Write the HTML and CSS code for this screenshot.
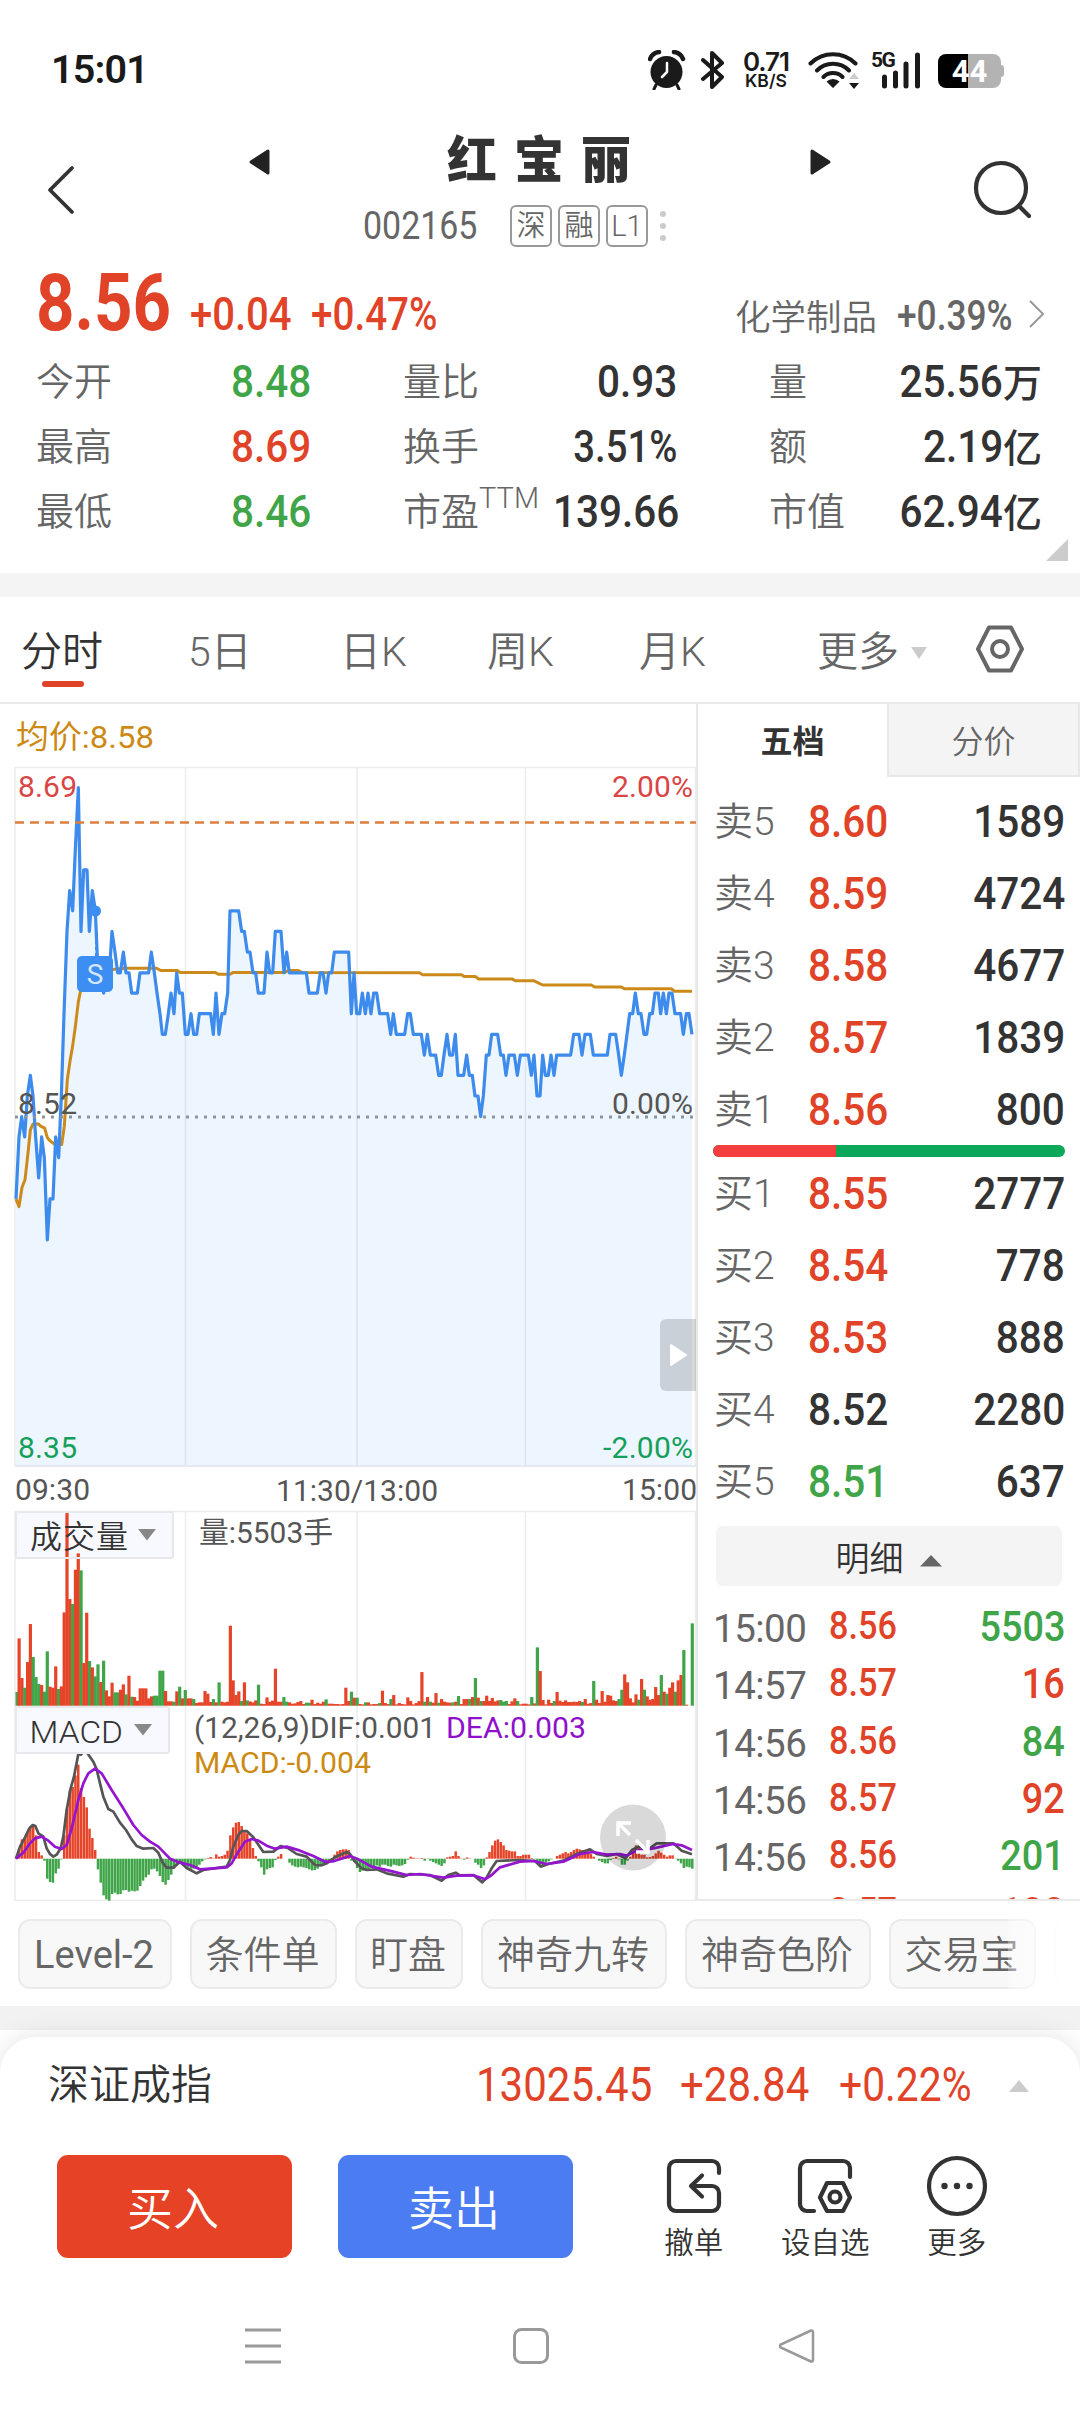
FILE: index.html
```html
<!DOCTYPE html>
<html lang="zh-CN">
<head>
<meta charset="utf-8">
<title>红宝丽 002165</title>
<link rel="stylesheet" href="styles.css">
</head>
<body>
<div class="status">
  <span class="clock">15:01</span>
  <div class="sys">
    <svg class="i-alarm" width="38" height="40" viewBox="0 0 38 40"><circle cx="18.500" cy="22" r="16"/><path d="M2 9a11 11 0 0 1 9-7M26 2a11 11 0 0 1 9 7" stroke-width="4.500"/><path d="M8 35l-2 4M29 35l2 4" stroke-width="3"/><path class="hand" d="M19 13v9l-5 5"/></svg>
    <svg class="i-bt" width="24" height="38" viewBox="0 0 24 38"><path d="M2 9l19 17-10 10V2l10 10L2 28"/></svg>
    <div class="rate"><b>0.71</b><i>KB/S</i></div>
    <svg class="i-wifi" width="51" height="38" viewBox="0 0 51 38"><path d="M2.500 12.500a32 32 0 0 1 45 0M9 19.500a22.500 22.500 0 0 1 32 0M15.500 26a13.500 13.500 0 0 1 19 0"/><path class="f" d="M25 37l-6.500-6.500a9.500 9.500 0 0 1 13 0zM41 32h10l-5 6z"/><path class="g" d="M41 28h10l-5-6z"/></svg>
    <div class="sig"><span>5G</span><svg width="49" height="37" viewBox="0 0 49 37"><path d="M12.500 25v9M23.500 21v13M34 12v22M45.500 3v31"/></svg></div>
    <div class="bat"><span>44</span></div>
  </div>
</div>
<header class="head">
  <svg class="back" width="30" height="50" viewBox="0 0 30 50"><path d="M27 3L5 25l22 22"/></svg>
  <svg class="tri tri-l" width="22" height="28" viewBox="0 0 22 28"><path d="M20 3v22L3 14z"/></svg>
  <div class="title">
    <h1>红宝丽</h1>
    <div class="sub"><span class="code">002165</span><em>深</em><em>融</em><em>L1</em><svg width="8" height="32" viewBox="0 0 8 32"><circle cx="4" cy="4" r="3"/><circle cx="4" cy="16" r="3"/><circle cx="4" cy="28" r="3"/></svg></div>
  </div>
  <svg class="tri tri-r" width="22" height="28" viewBox="0 0 22 28"><path d="M2 3v22l17-11z"/></svg>
  <svg class="search" width="60" height="60" viewBox="0 0 60 60"><circle cx="28" cy="28" r="25"/><path d="M46 46l10 10"/></svg>
</header>
<section class="quote">
  <div class="price">
    <span class="big up din">8.56</span><span class="chg up din">+0.04</span><span class="chg up din pct">+0.47%</span>
    <span class="ind">化学制品</span><span class="indv din">+0.39%</span>
    <svg width="18" height="30" viewBox="0 0 18 30"><path d="M2 2l13 13L2 28"/></svg>
  </div>
  <div class="stats">
    <div><span>今开</span><b class="dn din r">8.48</b></div><div><span>量比</span><b class="din r">0.93</b></div><div><span>量</span><b><i class="din r">25.56</i>万</b></div>
    <div><span>最高</span><b class="up din r">8.69</b></div><div><span>换手</span><b class="din r pc">3.51%</b></div><div><span>额</span><b><i class="din r">2.19</i>亿</b></div>
    <div><span>最低</span><b class="dn din r">8.46</b></div><div><span>市盈<sup>TTM</sup></span><b class="din r">139.66</b></div><div><span>市值</span><b><i class="din r">62.94</i>亿</b></div>
  </div>
  <svg class="corner" width="22" height="22" viewBox="0 0 22 22"><path d="M22 0v22H0z"/></svg>
</section>
<div class="band"></div>
<nav class="tabs">
  <span class="on">分时</span><span>5日</span><span>日K</span><span>周K</span><span>月K</span><span>更多<svg width="16" height="12" viewBox="0 0 16 12"><path d="M0 0h16l-8 12z"/></svg></span>
  <svg class="gear" width="50" height="50" viewBox="0 0 50 50"><path d="M14 3.500h22L47 25 36 46.500H14L3 25z"/><circle cx="25" cy="25" r="8"/></svg>
</nav>
<main class="main">
  <div class="left">
    <svg class="chart" width="698" height="1197" viewBox="0 704 698 1197">
      <g class="grid">
        <path d="M15 1466V767.500H697M185.500 767V1466M357 767V1466M525.500 767V1466M15 1511.500H697M15 1511V1900.500H697M185.500 1511V1900M357 1511V1900M525.500 1511V1900M695.500 767V1466M695.500 1511V1900"/>
      </g>
      <g transform="translate(0 690) scale(.33333 .38265)">
        <path class="area" id="area"/>
        <polyline class="ln avg" points="48,1330 57,1350 66,1300 75,1280 84,1210 91,1150 99,1134 115,1134 122,1140 134,1145 142,1170 150,1178 165,1188 185,1188 193,1140 202,1018 210,970 218,930 226,880 235,815 243,780 260,750 300,735 345,730 375,727 470,727 482,733 532,733 540,738 645,738 655,743 690,743 700,738 855,738 865,733 895,733 905,738 1258,739 1268,744 1384,744 1394,749 1426,749 1436,755 1536,755 1546,760 1602,760 1628,771 1774,771 1784,776 1864,776 1874,781 2014,781 2024,787 2076,787"/>
        <polyline class="ln px" id="px" points="48,1330 57,1168 65,1115 74,1168 82,1061 91,1007 99,1061 107,1168 116,1275 125,1168 133,1222 142,1437 150,1330 159,1330 167,1168 176,1222 184,1060 192,846 201,631 209,524 218,577 226,417 235,255 243,631 251,470 261,470 268,631 277,524 286,577 294,739 302,739 311,792 320,739 328,739 336,631 345,685 353,739 361,739 370,685 378,739 387,739 395,792 412,792 420,739 446,739 454,685 463,739 471,792 480,846 487,900 496,900 505,846 513,792 522,846 530,739 538,792 547,792 556,900 564,900 573,846 581,900 590,900 598,846 632,846 640,900 648,792 657,900 666,846 674,846 683,792 690,577 716,577 725,631 733,631 742,685 750,685 759,739 767,739 775,792 792,792 801,685 809,739 818,739 826,631 843,631 852,739 860,685 868,739 919,739 927,792 952,792 961,739 969,739 978,792 986,739 995,739 1003,685 1046,685 1054,846 1062,739 1070,846 1079,846 1087,792 1096,846 1104,792 1113,846 1121,792 1130,792 1139,846 1163,846 1172,900 1180,846 1189,900 1214,900 1223,846 1231,846 1240,900 1264,900 1273,954 1282,900 1291,954 1307,954 1316,1007 1324,1007 1332,954 1341,900 1349,954 1358,954 1366,900 1374,1007 1391,1007 1400,954 1408,1007 1417,1007 1425,1061 1434,1061 1442,1115 1450,1061 1459,954 1467,954 1475,900 1493,900 1502,954 1510,954 1518,1007 1527,954 1543,954 1552,1007 1561,954 1585,954 1594,1007 1602,954 1611,1061 1620,1061 1628,954 1636,1007 1645,1007 1653,954 1662,1007 1670,954 1712,954 1721,900 1737,900 1746,954 1755,900 1771,900 1780,954 1822,954 1830,900 1847,900 1856,954 1864,1007 1873,954 1881,900 1889,846 1898,846 1906,792 1915,846 1923,846 1932,900 1940,900 1949,846 1957,846 1965,792 1975,792 1982,846 1990,792 1999,846 2007,792 2016,792 2025,846 2042,846 2050,900 2059,846 2067,846 2076,900"/>
      </g>
      <path class="limit" d="M15 822.500H696"/>
      <path class="zero" d="M15 1117H693"/>
      <path class="base" d="M15 1466H697"/>
      <path class="mark-line" d="M96 911V957"/>
      <circle class="mark" cx="95.500" cy="911" r="5.500"/>
      <rect class="mark" x="77" y="956" width="36" height="36" rx="5"/>
      <text class="mark-s" x="95" y="984" text-anchor="middle">S</text>
      <g class="lab">
        <text class="c-avg big-lab" x="16" y="748" textLength="138" lengthAdjust="spacingAndGlyphs">均价:8.58</text>
        <text class="c-up" x="18" y="797" textLength="59">8.69</text><text class="c-up" x="612" y="797" textLength="81">2.00%</text>
        <text x="18" y="1114" textLength="59">8.52</text><text x="612" y="1114" textLength="81">0.00%</text>
        <text class="c-dn" x="18" y="1458" textLength="59">8.35</text><text class="c-dn" x="603" y="1458" textLength="90">-2.00%</text>
        <text x="15" y="1500" textLength="75">09:30</text><text x="276" y="1501" textLength="162">11:30/13:00</text><text x="622" y="1500" textLength="75">15:00</text>
      </g>
      <rect class="box" x="16" y="1512" width="157" height="46" rx="2"/>
      <g id="vol"></g>
      <path class="boxline" d="M17 1558H172"/>
      <g id="macd"></g>
      <g transform="translate(0 1500) scale(.33333)">
        <polyline class="ln dif" points="48,1076 60,1040 75,1012 88,985 98,975 106,978 115,1000 130,1010 140,1045 150,1062 160,1070 170,1064 182,1045 190,1010 200,930 212,865 222,830 235,762 243,764 250,755 258,752 266,765 280,785 290,808 300,850 310,890 325,927 340,935 360,968 378,990 395,1018 410,1038 430,1046 460,1044 475,1058 488,1088 500,1103 520,1103 540,1085 560,1104 590,1120 610,1110 650,1104 680,1100 690,1080 700,1040 715,1005 725,993 740,993 760,1012 790,1056 820,1055 842,1038 865,1045 890,1062 920,1070 945,1095 965,1096 980,1090 1005,1072 1040,1056 1050,1062 1065,1085 1085,1105 1100,1110 1130,1108 1160,1120 1210,1130 1230,1122 1290,1125 1325,1142 1345,1125 1367,1118 1380,1126 1420,1125 1447,1147 1460,1132 1475,1105 1490,1083 1560,1080 1605,1083 1622,1100 1645,1092 1690,1082 1730,1062 1770,1048 1790,1062 1820,1068 1850,1062 1876,1075 1896,1050 1915,1040 1945,1048 1970,1030 2020,1030 2045,1052 2076,1063"/>
        <polyline class="ln dea" points="48,1076 70,1058 90,1030 105,1015 125,1010 145,1022 165,1040 185,1047 200,1035 215,985 235,900 250,850 265,820 285,806 305,820 335,870 370,925 400,975 425,1005 450,1025 475,1040 510,1076 540,1088 570,1095 600,1108 680,1102 695,1090 715,1055 735,1025 755,1017 775,1022 800,1037 825,1046 860,1040 900,1052 940,1068 975,1085 1000,1084 1050,1068 1075,1078 1115,1100 1180,1115 1220,1125 1260,1122 1330,1133 1370,1127 1420,1126 1455,1138 1475,1125 1500,1102 1560,1085 1600,1083 1640,1092 1690,1085 1740,1062 1780,1056 1820,1064 1860,1062 1880,1067 1910,1052 1960,1045 2020,1032 2045,1036 2076,1050"/>
      </g>
      <rect class="box" x="16" y="1707" width="153" height="46" rx="2"/>
      <g class="lab">
        <text class="boxt" x="30" y="1548" textLength="98">成交量</text><path class="caret" d="M138 1529H156L147 1540.500Z"/>
        <text class="volt" x="199" y="1543" textLength="134" lengthAdjust="spacingAndGlyphs">量:5503手</text>
        <text class="boxt" x="29.500" y="1742.500" textLength="93.500" lengthAdjust="spacingAndGlyphs">MACD</text><path class="caret" d="M134 1724H152L143 1735.500Z"/>
        <text x="194" y="1738" textLength="242" lengthAdjust="spacingAndGlyphs">(12,26,9)DIF:0.001</text>
        <text class="c-dea" x="446" y="1738" textLength="140" lengthAdjust="spacingAndGlyphs">DEA:0.003</text>
        <text class="c-avg" x="194" y="1773" textLength="177" lengthAdjust="spacingAndGlyphs">MACD:-0.004</text>
      </g>
      <path class="handle" d="M697 1319V1391H666a6 6 0 0 1-6-6V1325a6 6 0 0 1 6-6z"/>
      <path class="handle-t" d="M671 1345V1365L686 1355Z"/>
      <circle class="handle" cx="633" cy="1837.500" r="33"/>
      <path class="arrows" d="M631 1823H618V1836M618 1823L630 1835M636 1840L648 1852M648 1840V1852H636"/>
    </svg>
  </div>
  <aside class="right">
    <div class="rt"><b>五档</b><span>分价</span></div>
    <div class="book">
      <div><span>卖5</span><b class="din up">8.60</b><b class="din r">1589</b></div>
      <div><span>卖4</span><b class="din up">8.59</b><b class="din r">4724</b></div>
      <div><span>卖3</span><b class="din up">8.58</b><b class="din r">4677</b></div>
      <div><span>卖2</span><b class="din up">8.57</b><b class="din r">1839</b></div>
      <div><span>卖1</span><b class="din up">8.56</b><b class="din r">800</b></div>
    </div>
    <div class="ratio"><i></i></div>
    <div class="book bid">
      <div><span>买1</span><b class="din up">8.55</b><b class="din r">2777</b></div>
      <div><span>买2</span><b class="din up">8.54</b><b class="din r">778</b></div>
      <div><span>买3</span><b class="din up">8.53</b><b class="din r">888</b></div>
      <div><span>买4</span><b class="din">8.52</b><b class="din r">2280</b></div>
      <div><span>买5</span><b class="din dn">8.51</b><b class="din r">637</b></div>
    </div>
    <div class="more">明细<svg width="24" height="13" viewBox="0 0 24 13"><path d="M1 12.500L12 1l11 11.500z"/></svg></div>
    <div class="ticks">
      <div><span>15:00</span><b class="din up">8.56</b><b class="din r q dn">5503</b></div>
      <div><span>14:57</span><b class="din up">8.57</b><b class="din r q up">16</b></div>
      <div><span>14:56</span><b class="din up">8.56</b><b class="din r q dn">84</b></div>
      <div><span>14:56</span><b class="din up">8.57</b><b class="din r q up">92</b></div>
      <div><span>14:56</span><b class="din up">8.56</b><b class="din r q dn">201</b></div>
      <div><span>14:56</span><b class="din up">8.57</b><b class="din r q up">100</b></div>
    </div>
  </aside>
</main>
<div class="chips"><span class="lv">Level-2</span><span>条件单</span><span>盯盘</span><span>神奇九转</span><span>神奇色阶</span><span>交易宝</span><span></span></div>
<div class="band low"></div>
<footer class="dock">
  <div class="index"><span class="name">深证成指</span><span class="din up i1">13025.45</span><span class="din up i2">+28.84</span><span class="din up i3">+0.22%</span><svg width="24" height="14" viewBox="0 0 24 14"><path d="M12 1l10 12H2z"/></svg></div>
  <div class="acts">
    <button class="buy">买入</button><button class="sell">卖出</button>
    <div class="act"><svg width="62" height="62" viewBox="0 0 62 62"><path d="M56 18v-5a7 7 0 0 0-7-7H13a7 7 0 0 0-7 7v36a7 7 0 0 0 7 7h36a7 7 0 0 0 7-7V38a7 7 0 0 0-7-7H28M39 20.500L28 31l11 10.500"/></svg>撤单</div>
    <div class="act"><svg width="62" height="62" viewBox="0 0 62 62"><path d="M56 22v-9a7 7 0 0 0-7-7H13a7 7 0 0 0-7 7v36a7 7 0 0 0 7 7h7M33 28h16l7 14.500L49 56H33l-7-13.500z"/><circle cx="41" cy="42" r="5.500"/></svg>设自选</div>
    <div class="act"><svg width="62" height="62" viewBox="0 0 62 62"><circle cx="31" cy="31" r="28"/><g class="dots"><circle cx="18.500" cy="31" r="3.200"/><circle cx="31" cy="31" r="3.200"/><circle cx="43.500" cy="31" r="3.200"/></g></svg>更多</div>
  </div>
</footer>
<div class="sysnav">
  <svg width="36" height="36" viewBox="0 0 36 36"><path d="M0 2h36M0 18h36M0 34h36"/></svg>
  <svg width="36" height="36" viewBox="0 0 36 36"><rect x="1.500" y="1.500" width="33" height="33" rx="7"/></svg>
  <svg width="36" height="36" viewBox="0 0 36 36"><path d="M32 2.500a1.500 1.500 0 0 1 2 1.500v28a1.500 1.500 0 0 1-2 1.500L3 20a2 2 0 0 1 0-4z"/></svg>
</div>
<script src="chart.js"></script>
</body>
</html>
```
FILE: styles.css
```css
* { box-sizing: border-box; margin: 0; padding: 0; }
body { width: 1080px; height: 2412px; overflow: hidden; background: #fff; color: #333; font-family: Roboto, "Noto Sans CJK SC", sans-serif; display: flex; flex-direction: column; }
svg { display: block; flex: none; }
i, em { font-style: normal; }
.up { color: #e04328; }
.dn { color: #3fa548; }
.din { display: inline-block; transform: scaleX(.9); transform-origin: left; font-weight: 550; white-space: nowrap; }
.din.r { transform-origin: right; }

.status { height: 104px; padding: 34px 79px 0 51px; display: flex; justify-content: space-between; color: #1a1a1a; }
.clock { font-size: 39.5px; font-weight: 600; line-height: 72px; letter-spacing: -.8px; }
.sys { display: flex; height: 70px; padding-top: 16px; }
.sys svg { fill: none; stroke: #1a1a1a; stroke-linecap: round; stroke-linejoin: round; }
.sys .i-alarm { margin-right: 15px; }
.sys .i-alarm circle { fill: #1a1a1a; stroke: none; }
.sys .i-alarm .hand { stroke: #fff; stroke-width: 2.5; }
.sys .i-bt { stroke-width: 4; margin: 1px 14px 0 0; }
.rate { width: 54px; text-align: center; font-family: Inter, sans-serif; margin-right: 15px; }
.rate b { display: block; font-size: 26px; font-weight: 600; line-height: 24px; letter-spacing: -1px; }
.rate i { display: block; font-size: 17.5px; font-weight: 600; line-height: 14px; }
.sys .i-wifi { stroke-width: 4; margin: 1px 13px 0 0; }
.i-wifi .f { fill: #1a1a1a; stroke: none; }
.i-wifi .g { fill: #ccc; stroke: none; }
.sig { position: relative; width: 50px; margin-right: 16px; }
.sig span { position: absolute; left: -1px; top: 1px; font-size: 21px; font-weight: 700; line-height: 18px; letter-spacing: -1.5px; }
.sys .sig svg { stroke-width: 5; margin-top: 2px; }
.bat { position: relative; width: 63px; height: 34px; margin-top: 4px; border-radius: 8px; background: linear-gradient(90deg, #000 30px, #b3b3b3 30px); text-align: center; }
.bat::after { content: ""; position: absolute; right: -3px; top: 11px; width: 4px; height: 12px; border-radius: 0 3px 3px 0; background: #b3b3b3; }
.bat span { color: #fff; font-size: 31px; font-weight: 700; line-height: 35px; }

.head { height: 158px; padding: 0 47px 0 45px; display: flex; }
.back { margin-top: 61px; fill: none; stroke: #333; stroke-width: 3.8; stroke-linecap: round; stroke-linejoin: round; }
.tri { margin-top: 44px; fill: #222; stroke: #222; stroke-width: 3; stroke-linejoin: round; }
.tri-l { margin-left: 173px; }
.tri-r { margin-left: auto; }
.title { width: 420px; margin-left: 59px; padding: 24px 0 0 34px; }
h1 { font-size: 50px; font-weight: 900; line-height: 66px; letter-spacing: 17px; color: #333; text-align: left; padding-left: 84px; white-space: nowrap; }
.sub { display: flex; align-items: center; height: 42px; margin-top: 11px; color: #666; }
.code { width: 147px; font-size: 39px; display: inline-block; transform: scaleX(.87); transform-origin: left; font-weight: 400; }
.sub em { flex: none; width: 42px; height: 42px; border: 2px solid #999; border-radius: 6px; font-size: 29px; line-height: 38px; text-align: center; margin-right: 6px; font-weight: 350; }
.sub svg { fill: #ccc; margin-left: 5px; }
.search { margin: 56px 0 0 141px; fill: none; stroke: #333; stroke-width: 4.2; stroke-linecap: round; }

.quote { height: 311px; padding: 0 38px 0 36px; position: relative; }
.price { display: grid; grid-template-columns: 154px 121px 1fr 162px 131px 14px; align-items: baseline; height: 86px; white-space: nowrap; }
.price .big { font-size: 80px; line-height: 82px; font-weight: 700; transform: scaleX(.84); }
.price .chg { font-size: 46px; transform: scaleX(.87); }
.price .pct { transform: scaleX(.84); }
.ind { font-size: 35.5px; color: #666; font-weight: 350; }
.price .indv { font-size: 42px; color: #666; transform: scaleX(.84); font-weight: 500; }
.price svg { align-self: start; margin-top: 37px; margin-left: 0; width: 18px; fill: none; stroke: #999; stroke-width: 2; }
.stats { display: grid; grid-template-columns: 275px 274px 273px; column-gap: 92px; grid-auto-rows: 65px; }
.stats div { display: flex; justify-content: space-between; line-height: 67px; white-space: nowrap; }
.stats span { font-size: 38px; color: #666; font-weight: 350; line-height: 69px; }
.stats sup { font-size: 29px; position: relative; top: -5px; line-height: 0; vertical-align: 12px; }
.stats b { font-size: 45px; font-weight: 550; }
.stats .pc { transform: scaleX(.85); }
.stats b:not(.din) { font-size: 39px; font-weight: 450; }
.stats b i { font-size: 45px; }
.corner { position: absolute; right: 12px; top: 277px; fill: #ccc; }
.band { height: 24px; background: #f4f4f4; }

.tabs { height: 107px; padding: 0 55px 0 21px; display: grid; grid-template-columns: 167px 152px 147px 152px 178px 156px 50px; border-bottom: 2px solid #e9e9e9; font-size: 41px; color: #666; font-weight: 350; line-height: 111px; }
.tabs span { display: flex; align-items: center; white-space: nowrap; }
.tabs span svg { fill: #ccc; margin-left: 12px; }
.tabs .on { color: #333; position: relative; }
.tabs .on::after { content: ""; position: absolute; left: 21px; top: 84px; width: 42px; height: 6px; border-radius: 3px; background: #e04328; }
.gear { margin: 27px 0 0 2px; fill: none; stroke: #666; stroke-width: 4; stroke-linejoin: round; }

.main { height: 1197px; display: flex; }
.left { width: 696px; }
.chart .grid { fill: none; stroke: #ececec; stroke-width: 1.5; }
.area { fill: rgba(60, 140, 240, .09); }
.ln { fill: none; stroke-width: 3.2; stroke-linejoin: round; vector-effect: non-scaling-stroke; }
.avg { stroke: #cc8a1a; stroke-width: 3; }
.px { stroke: #3d8bec; }
.dif { stroke: #555; stroke-width: 2.7; }
.dea { stroke: #9414d0; stroke-width: 2.7; }
.limit { stroke: #dc7f3f; stroke-width: 2.5; stroke-dasharray: 9 6; }
.zero { stroke: #8e949c; stroke-width: 3; stroke-dasharray: 3 6; }
.base { stroke: #e4e9ef; stroke-width: 2; }
.mark { fill: #3d8ef2; }
.mark-line { stroke: #3d8ef2; stroke-width: 2; stroke-dasharray: 3 3; }
.mark-s { font-size: 28px; fill: #d5e6fc; }
.lab { font-size: 30px; fill: #555; }
.big-lab { font-size: 32px; font-weight: 400; }
.c-avg { fill: #cc8a14; }
.c-up { fill: #d94545; }
.c-dn { fill: #14a05a; }
.c-dea { fill: #8f10cc; }
.box { fill: #f8f9fe; stroke: #e8e8ec; stroke-width: 2; }
.boxline { stroke: #e8e8ec; stroke-width: 2; }
.boxt { font-size: 32px; fill: #333; font-weight: 350; }
.volt { font-size: 29px; }
.caret { fill: #888; }
.b-r { fill: #e64428; }
.b-g { fill: #3fa548; }
.handle { fill: #000; fill-opacity: .15; }
.handle-t { fill: #fff; stroke: #fff; stroke-width: 2; stroke-linejoin: round; }
.arrows { fill: none; stroke: #fff; stroke-width: 3.5; }

.right { width: 384px; height: 1197px; border-left: 2px solid #e9e9e9; border-bottom: 2px solid #e9e9e9; overflow: hidden; }
.rt { display: flex; height: 73px; font-size: 32px; line-height: 77px; text-align: center; }
.rt b { width: 189px; font-weight: 700; }
.rt span { width: 193px; background: #f4f4f4; border: 2px solid #e8e8e8; border-top: 0; color: #666; font-weight: 350; }
.book { padding: 9px 15px 0 16px; }
.book div, .ticks div { display: grid; grid-template-columns: 94px 1fr auto; height: 72px; line-height: 72px; }
.book.bid { padding-top: 1px; height: 360px; }
.book { height: 368px; }
.book span { font-size: 39px; color: #666; font-weight: 350; }
.book b { font-size: 45px; }
.ratio { height: 12px; margin: 0 15px; border-radius: 6px; background: #0ba85a; overflow: hidden; }
.ratio i { display: block; width: 35%; height: 12px; background: #f43e3e; }
.more { margin: 9px 18px 12px; height: 60px; border-radius: 6px; background: #f4f4f4; display: flex; justify-content: center; align-items: center; font-size: 34px; font-weight: 350; }
.more svg { fill: #666; margin: 8px 0 0 15px; }
.ticks { padding: 0 15px 0 15px; }
.ticks div { grid-template-columns: 116px 1fr auto; height: 57.3px; line-height: 56px; }
.ticks span { font-size: 38.5px; color: #666; font-weight: 400; line-height: 62px; letter-spacing: -.5px; }
.ticks b { font-size: 38px; }
.ticks .q { font-size: 42px; line-height: 58px; }

.chips { height: 105px; padding: 18px 0 0 18px; display: flex; gap: 18px; width: 1062px; overflow: hidden; white-space: nowrap; position: relative; }
.chips span { flex: none; height: 70px; border: 2px solid #ebebeb; border-radius: 12px; background: #f8f8f8; font-size: 38px; line-height: 69px; color: #666; font-weight: 350; width: 186px; text-align: center; text-indent: -2px; }
.chips .lv { width: 154px; font-weight: 400; }
.chips span:nth-child(2), .chips span:nth-child(6) { width: 147px; }
.chips span:nth-child(3) { width: 108px; }
.chips::after { content: ""; position: absolute; right: 0; top: 0; width: 54px; height: 105px; background: linear-gradient(90deg, rgba(255, 255, 255, .3), #fff); }
.low { flex: none; background: #f2f2f2; }

.dock { height: 253px; margin-top: 7px; border-radius: 36px 36px 0 0; background: #fff; box-shadow: 0 -2px 24px rgba(0, 0, 0, .1); clip-path: inset(-36px 0 0 0); position: relative; }
.index { height: 98px; padding-left: 48px; display: grid; grid-template-columns: 428px 204px 159px 168px 24px; align-items: center; white-space: nowrap; }
.name { font-size: 41px; font-weight: 350; line-height: 94px; padding-bottom: 2px; }
.index .din { font-size: 48px; transform: scaleX(.875); font-weight: 450; line-height: 94px; padding-bottom: 2px; }
.index .i3 { transform: scaleX(.85); }
.index svg { fill: #ccc; }
.acts { display: flex; padding: 20px 0 0 57px; }
button { width: 235px; height: 103px; margin-right: 46px; border: 0; border-radius: 11px; color: #fff; font: 350 46px Roboto, "Noto Sans CJK SC", sans-serif; padding: 0 3px 3px 0; }
.buy { background: #e64226; }
.sell { background: #4c7cf2; margin-right: 55px; }
.act { width: 131.5px; font-size: 29.5px; line-height: 52px; text-align: center; font-weight: 350; }
.act svg { margin: 0 auto; fill: none; stroke: #333; stroke-width: 4.2; stroke-linecap: round; stroke-linejoin: round; }
.act .dots { fill: #333; stroke: none; }
.sysnav { display: flex; gap: 232px; padding: 38px 0 0 245px; }
.sysnav svg { fill: none; stroke: #999; stroke-width: 3; }
.sysnav svg:last-child { margin-left: -2px; stroke-width: 2.5; }
```
FILE: chart.js
```js
// One value per trading minute: bar height, positive is red, negative is green.
const volume = [-41,202,83,-54,131,245,-146,-86,-65,62,-42,-163,57,54,118,-50,58,280,578,320,-305,408,457,-406,128,279,-134,115,-88,-124,71,-135,46,28,69,-40,-40,48,64,-34,90,-27,26,15,52,52,52,22,28,-30,-30,-105,-105,44,13,13,-12,43,-57,22,-47,22,22,-20,8,10,10,44,36,11,-20,10,-70,12,10,12,240,76,32,43,-14,70,-16,13,10,16,-63,6,5,25,12,15,111,12,12,-26,-12,10,6,7,11,14,5,-9,-9,18,5,9,6,12,-19,6,6,5,5,4,5,54,14,-42,24,-24,5,4,-10,10,4,5,5,-8,45,8,5,-20,32,4,8,5,4,25,14,4,8,14,101,-12,26,-12,9,38,-9,20,12,10,9,-10,12,-29,5,20,20,-20,26,-83,24,-14,14,30,14,23,13,16,-17,-12,-14,5,13,22,-14,4,6,6,4,-26,7,-175,104,17,4,18,8,-14,41,15,11,16,11,11,12,11,14,-11,20,6,8,-74,18,8,44,12,32,30,16,14,-20,-48,94,70,22,10,34,-18,80,-48,28,18,20,56,32,-92,42,-36,54,70,-42,76,92,-167,3,0,-247];
const macd = [8,30,58,62,80,96,98,70,20,10,-6,-60,-70,-72,-44,-30,-2,70,150,205,215,250,282,212,185,154,90,62,26,-32,-72,-110,-122,-126,-106,-102,-107,-106,-95,-94,-99,-96,-98,-96,-82,-66,-56,-48,-32,-30,-38,-52,-70,-78,-64,-48,-30,-20,-14,-18,-22,-26,-30,-30,-26,-18,-8,-2,2,5,1,13,6,8,12,24,70,94,108,110,98,82,76,56,32,8,-8,-26,-48,-32,-28,-26,-4,6,14,0,0,-12,-20,-24,-26,-24,-26,-28,-32,-35,-34,-30,-22,-18,-12,-5,2,12,22,26,28,28,26,-6,-10,-28,-40,-36,-34,-32,-28,-22,-20,-24,-18,-18,-22,-24,-18,-20,-22,-20,-16,-3,6,3,1,1,2,-6,-1,-6,-10,-14,-18,-22,-14,4,6,8,22,8,1,-3,4,1,0,-12,-18,-28,-20,4,20,40,54,58,50,40,26,24,22,22,8,8,12,12,12,2,-2,-10,-22,-22,-12,-8,-2,0,8,12,16,20,16,20,26,30,28,26,20,22,14,6,0,-6,-10,-14,-14,-4,2,6,-2,-18,-18,-6,6,20,40,34,12,12,4,5,8,16,24,18,12,6,10,10,1,-6,-14,-28,-24,-26,-30];

function bars(id, data, base, signed, width) {
  const group = document.getElementById(id);
  data.forEach((v, i) => {
    if (!v) return;
    const h = Math.abs(v) / 3;
    const r = document.createElementNS("http://www.w3.org/2000/svg", "rect");
    const x = 16.3 + i * 2.8167 - width / 2;
    r.setAttribute("x", Math.max(x, 15.5));
    r.setAttribute("y", signed && v < 0 ? base : base - h);
    r.setAttribute("width", width);
    r.setAttribute("height", h);
    r.setAttribute("class", v > 0 ? "b-r" : "b-g");
    group.appendChild(r);
  });
}
bars("vol", volume, 1705.7, false, 3.2);
bars("macd", macd, 1858.7, true, 2.5);

const line = document.getElementById("px").getAttribute("points");
document.getElementById("area").setAttribute("d", "M48 2028L" + line.split(" ").join("L") + "L2076 2028Z");
```
